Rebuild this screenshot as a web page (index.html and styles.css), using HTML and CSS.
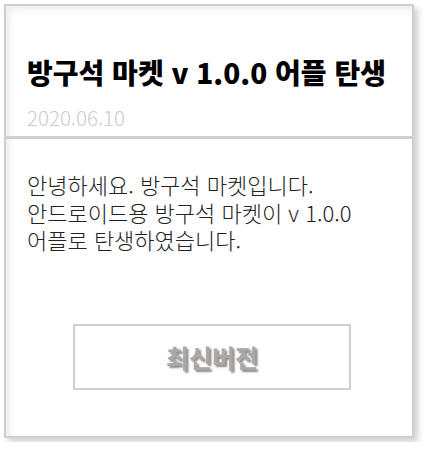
FILE: index.html
```html
<!DOCTYPE html>
<html lang="ko">
<head>
<meta charset="utf-8">
<link rel="stylesheet" href="styles.css">
</head>
<body>
<div class="card">
  <div class="head">
    <h1 class="title">방구석 마켓 v 1.0.0 어플 탄생</h1>
    <div class="date">2020.06.10</div>
  </div>
  <div class="content">
    <p class="text">안녕하세요. 방구석 마켓입니다.<br>안드로이드용 방구석 마켓이 v 1.0.0<br>어플로 탄생하였습니다.</p>
    <div class="btn-row">
      <div class="btn">최신버전</div>
    </div>
  </div>
</div>
</body>
</html>
```
FILE: styles.css
```css
html, body {
  margin: 0;
  background: #fff;
}
body {
  padding: 4px;
  font-family: "Noto Sans CJK KR", "Noto Sans", sans-serif;
}
.card {
  box-sizing: border-box;
  width: 410px;
  height: 434px;
  border: 2px solid #cfcfcf;
  background: #fff;
  box-shadow: 4px 4px 6px rgba(0,0,0,0.18), inset 4px 4px 6px rgba(0,0,0,0.07);
  display: flex;
  flex-direction: column;
}
.head {
  height: 130px;
  border-bottom: 3px solid #cfcfcf;
  padding: 0 0 0 21px;
  box-sizing: content-box;
}
.title {
  margin: 48px 0 0;
  font-size: 28px;
  font-weight: 900;
  line-height: 36px;
  color: #000;
  letter-spacing: 0;
}
.date {
  margin-top: 14px;
  font-size: 20.5px;
  font-weight: 300;
  line-height: 26px;
  color: #cccccc;
}
.content {
  padding: 0 21px 0 21px;
}
.text {
  margin: 32px 0 0;
  font-size: 22px;
  font-weight: 300;
  line-height: 27.5px;
  color: #222;
}
.btn-row {
  display: flex;
  justify-content: center;
  padding-left: 6px;
  margin-top: 70px;
}
.btn {
  box-sizing: border-box;
  width: 278px;
  height: 66px;
  border: 2px solid #cfcfcf;
  display: flex;
  align-items: center;
  justify-content: center;
  font-size: 25px;
  font-weight: 700;
  color: #a9a9a9;
  text-shadow: 2px 2px 2px #888;
}
```
